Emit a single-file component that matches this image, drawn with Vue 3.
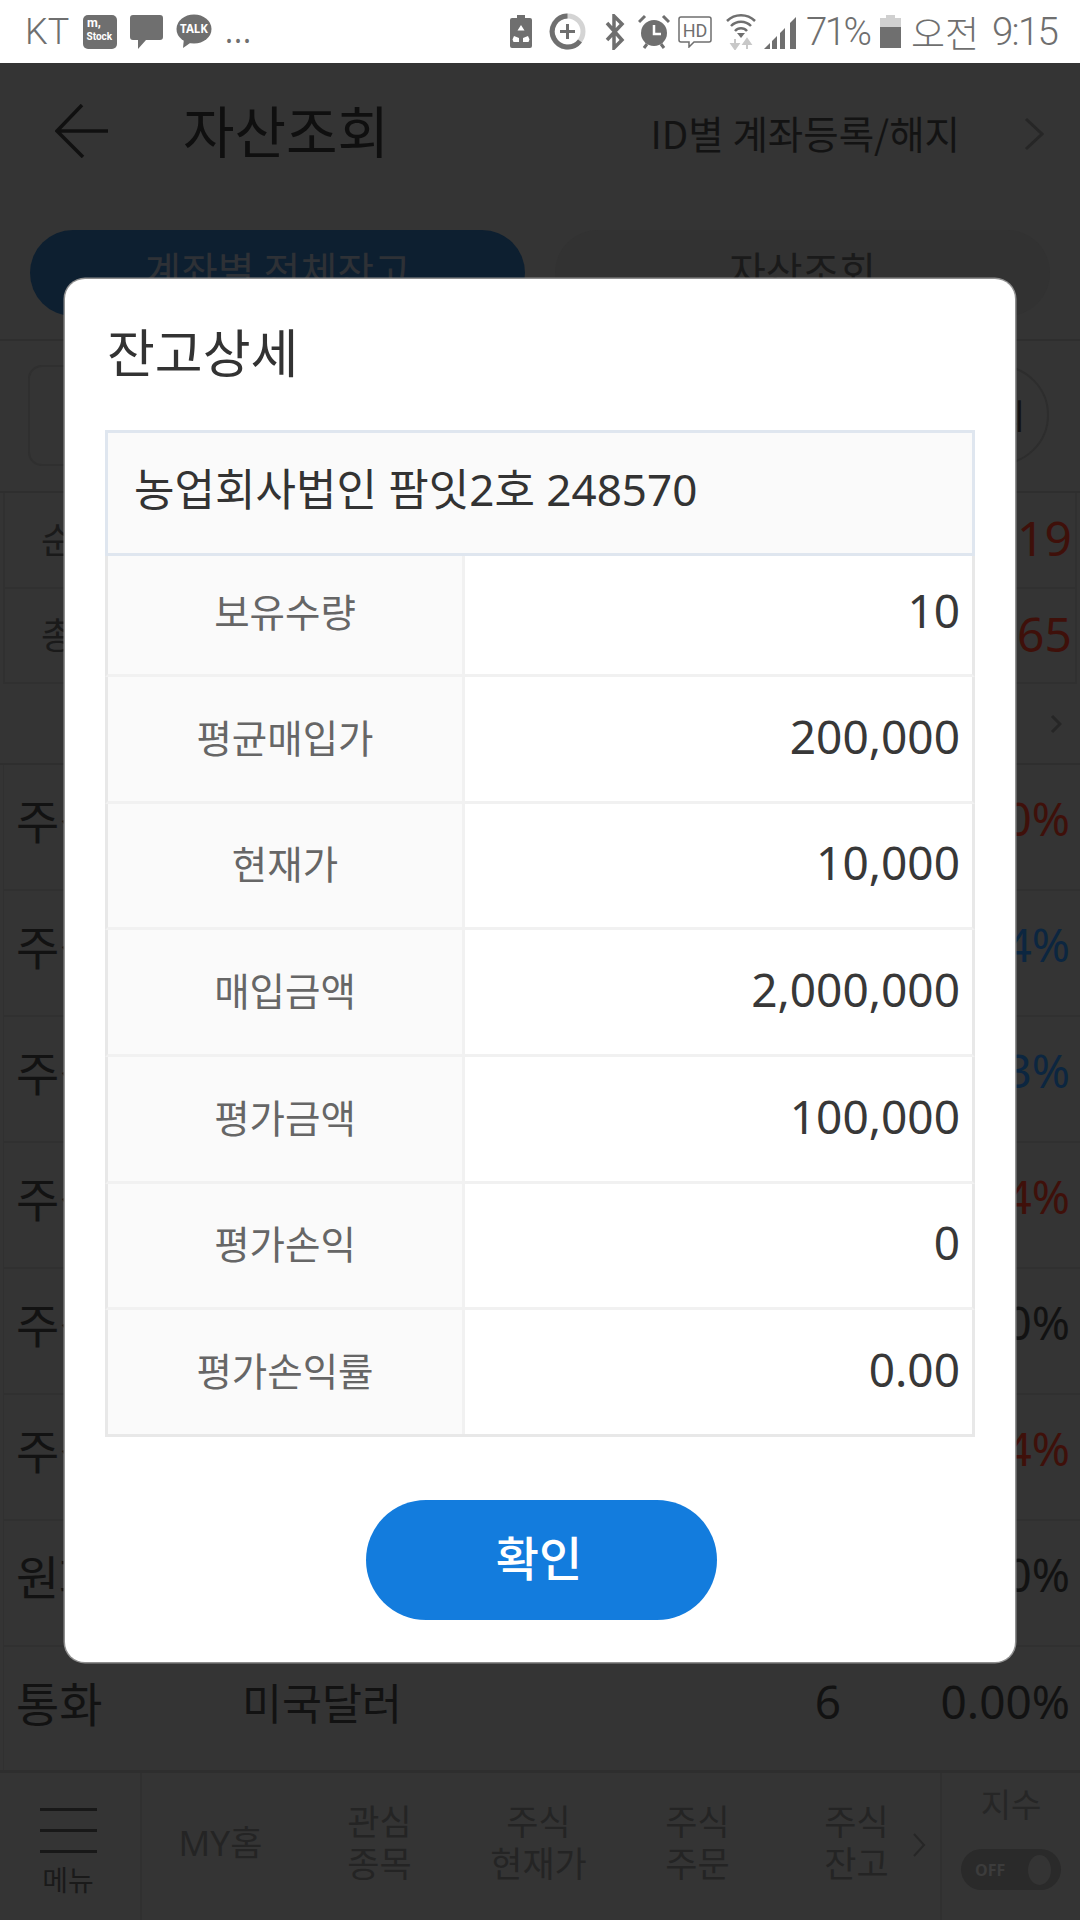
<script setup>
const tabs = [
  { label: '계좌별 전체잔고', active: true },
  { label: '자산조회', active: false }
]
const summary = [
  { label: '순자산', value: '019' },
  { label: '총자산', value: '65' }
]
const rows = [
  { type: '주식', pct: '0%', tone: 'red' },
  { type: '주식', pct: '4%', tone: 'blue' },
  { type: '주식', pct: '3%', tone: 'blue' },
  { type: '주식', pct: '4%', tone: 'red' },
  { type: '주식', pct: '0%', tone: '' },
  { type: '주식', pct: '4%', tone: 'red' },
  { type: '원화', pct: '0%', tone: '' },
  { type: '통화', name: '미국달러', qty: '6', pct: '0.00%', tone: '' }
]
const nav = [
  ['MY홈'],
  ['관심', '종목'],
  ['주식', '현재가'],
  ['주식', '주문'],
  ['주식', '잔고']
]
const details = [
  ['보유수량', '10'],
  ['평균매입가', '200,000'],
  ['현재가', '10,000'],
  ['매입금액', '2,000,000'],
  ['평가금액', '100,000'],
  ['평가손익', '0'],
  ['평가손익률', '0.00']
]
</script>

<template>
  <div class="page">
    <header class="status">
      <span class="carrier">KT</span>
      <svg class="ic mstock" width="34" height="34" viewBox="0 0 34 34">
        <rect width="34" height="34" rx="5" fill="#6f6f6f" />
        <text x="4" y="11.500" class="ms1">m,</text>
        <text x="3.500" y="24.500" class="ms2">Stock</text>
      </svg>
      <svg class="ic chat" width="33" height="35" viewBox="0 0 33 35">
        <path d="M3 1h27a3 3 0 0 1 3 3v19a3 3 0 0 1-3 3H16l-8 9v-9H3a3 3 0 0 1-3-3V4a3 3 0 0 1 3-3z" fill="#6f6f6f" />
      </svg>
      <svg class="ic talk" width="36" height="35" viewBox="0 0 36 35">
        <ellipse cx="18" cy="15" rx="17.500" ry="14.500" fill="#6f6f6f" />
        <path d="M8 24l-1 10 10-7z" fill="#6f6f6f" />
        <text x="18" y="19" text-anchor="middle" class="tk">TALK</text>
      </svg>
      <span class="more">...</span>
      <span class="spacer"></span>
      <svg class="ic" width="22" height="33" viewBox="0 0 22 33">
        <path d="M7 0h8v3h5a2 2 0 0 1 2 2v26a2 2 0 0 1-2 2H2a2 2 0 0 1-2-2V5a2 2 0 0 1 2-2h5z" fill="#6f6f6f" />
        <path d="M11 10l-3.500 5.500h7zM4 21l-1.500 3.500 1 2.500H9v-4zM18 21l1.500 3.500-1 2.500H13v-4z" fill="#fff" />
      </svg>
      <svg class="ic donut" width="37" height="37" viewBox="0 0 37 37">
        <circle cx="18.500" cy="18.500" r="15.500" fill="none" stroke="#d4d4d4" stroke-width="5" />
        <path d="M18.500 3A15.500 15.500 0 1 0 31 28" fill="none" stroke="#6f6f6f" stroke-width="5" />
        <path d="M18.500 11v15M11 18.500h15" stroke="#6f6f6f" stroke-width="3" />
      </svg>
      <svg class="ic bt" width="22" height="36" viewBox="0 0 22 36">
        <path d="M3 9l15 17-8 8V2l8 8L3 26" fill="none" stroke="#6f6f6f" stroke-width="3.500" />
      </svg>
      <svg class="ic alarm" width="32" height="36" viewBox="0 0 32 36">
        <circle cx="16" cy="19" r="13" fill="#6f6f6f" />
        <path d="M16 11v9h7" fill="none" stroke="#fff" stroke-width="2.500" />
        <path d="M1 8l6-6M31 8l-6-6M6 34l3-4M26 34l-3-4" stroke="#6f6f6f" stroke-width="3" />
      </svg>
      <svg class="ic hd" width="34" height="32" viewBox="0 0 34 32">
        <path d="M3 1h28a2 2 0 0 1 2 2v21a2 2 0 0 1-2 2H16l-5 5v-5H3a2 2 0 0 1-2-2V3a2 2 0 0 1 2-2z" fill="none" stroke="#6f6f6f" stroke-width="1.500" />
        <text x="17" y="21" text-anchor="middle" class="hdt">HD</text>
      </svg>
      <svg class="ic wifi" width="30" height="36" viewBox="0 0 30 36">
        <path d="M1 7a20 20 0 0 1 28 0M5 12a14 14 0 0 1 20 0M9 17a8 8 0 0 1 12 0" fill="none" stroke="#6f6f6f" stroke-width="2.500" />
        <path d="M11 19h8l-4 5z" fill="#6f6f6f" />
        <path d="M9 25v7M5.500 30h7l-3.500 5zM21 35v-7M17.500 30h7L21 25z" stroke="#c8c8c8" fill="#c8c8c8" stroke-width="2" />
      </svg>
      <svg class="ic signal" width="32" height="34" viewBox="0 0 32 34">
        <path d="M0 34l6-6v6z" fill="#6f6f6f" />
        <path d="M8 26l5-5v13H8zM16 18l5-5v21h-5z" fill="#6f6f6f" />
        <path d="M26 8l6-6v32h-6z" fill="#6f6f6f" />
      </svg>
      <span class="stat pct">71%</span>
      <svg class="ic batt" width="21" height="33" viewBox="0 0 21 33">
        <path d="M6 0h9v3h6v9H0V3h6z" fill="#d0d0d0" />
        <rect y="12" width="21" height="21" fill="#6f6f6f" />
      </svg>
      <span class="stat ampm">오전</span>
      <span class="stat clock">9:15</span>
    </header>

    <div class="appbar">
      <svg class="back" width="54" height="54" viewBox="0 0 54 54">
        <path d="M53 27H2M27 1L2 27l26 26" fill="none" stroke="#101010" stroke-width="3.500" />
      </svg>
      <h1 class="screen-title">자산조회</h1>
      <span class="id-link">ID별 계좌등록/해지</span>
      <svg class="id-chev" width="20" height="34" viewBox="0 0 20 34">
        <path d="M2 2l16 15L2 32" fill="none" stroke="#262626" stroke-width="3" />
      </svg>
    </div>

    <div class="tabs">
      <div v-for="t in tabs" :key="t.label" class="tab" :class="{ active: t.active }">{{ t.label }}</div>
    </div>

    <div class="search">
      <div class="search-box"></div>
      <div class="search-btn"><span class="search-text">조회</span></div>
    </div>

    <div class="summary">
      <div v-for="s in summary" :key="s.label" class="sum-row">
        <span>{{ s.label }}</span>
        <span class="red">{{ s.value }}</span>
      </div>
    </div>

    <div class="pager">
      <svg width="12" height="20" viewBox="0 0 12 20">
        <path d="M2 2l8 8-8 8" fill="none" stroke="#262626" stroke-width="3" />
      </svg>
    </div>

    <div class="list">
      <div v-for="(r, i) in rows" :key="i" class="item">
        <span class="type">{{ r.type }}</span>
        <span class="name">{{ r.name }}</span>
        <span class="qty">{{ r.qty }}</span>
        <span class="pctv" :class="r.tone">{{ r.pct }}</span>
      </div>
    </div>

    <nav class="bottom">
      <div class="menu">
        <span class="bars"><i></i><i></i><i></i></span>
        <span class="menu-label">메뉴</span>
      </div>
      <div class="nav-items">
        <div v-for="n in nav" :key="n.join()" class="nav-item">
          <span v-for="l in n" :key="l">{{ l }}</span>
        </div>
        <svg class="nav-chev" width="13" height="24" viewBox="0 0 13 24">
          <path d="M1 1l10 11L1 23" fill="none" stroke="#262626" stroke-width="2" />
        </svg>
      </div>
      <div class="index">
        <span class="index-label">지수</span>
        <div class="toggle"><span class="off">OFF</span><span class="knob"></span></div>
      </div>
    </nav>

    <section class="modal">
      <h2 class="modal-title">잔고상세</h2>
      <div class="table">
        <div class="thead">농업회사법인 팜잇2호 248570</div>
        <div v-for="d in details" :key="d[0]" class="tr">
          <div class="th">{{ d[0] }}</div>
          <div class="td">{{ d[1] }}</div>
        </div>
      </div>
      <button class="ok" type="button">확인</button>
    </section>
  </div>
</template>

<style>
html, body { margin: 0; padding: 0; }
</style>

<style scoped>
.page {
  position: relative;
  width: 1080px;
  height: 1920px;
  overflow: hidden;
  display: flex;
  flex-direction: column;
  background: #343434;
  color: #111;
  font-family: "Noto Sans", "Noto Sans CJK KR", sans-serif;
}

/* status bar */
.status {
  flex: none;
  height: 63px;
  background: #fff;
  display: flex;
  align-items: center;
  padding: 0 24px 0 25px;
  box-sizing: border-box;
  color: #6f6f6f;
}
.ic { flex: none; display: block; }
.carrier { font: 300 36px Roboto, sans-serif; width: 58px; }
.chat { margin-left: 13px; }
.talk { margin-left: 13px; }
.ms1 { font: 700 12.500px Roboto, sans-serif; fill: #fff; }
.ms2 { font: 700 10px Roboto, sans-serif; fill: #fff; }
.tk { font: 700 11.500px "Noto Sans", sans-serif; fill: #fff; }
.hdt { font: 400 18px Roboto, sans-serif; fill: #6f6f6f; }
.more { font: 400 30px "Noto Sans", sans-serif; margin-left: 13px; letter-spacing: 1px; }
.spacer { flex: 1; }
.donut { margin-left: 17px; }
.bt { margin-left: 18px; }
.alarm { margin-left: 12px; }
.hd { margin-left: 8px; }
.wifi { margin-left: 14px; }
.signal { margin-left: 8px; }
.stat { font: 300 38.500px Roboto, "Noto Sans CJK KR", sans-serif; line-height: 40px; }
.pct { margin-left: 10px; width: 66px; letter-spacing: -2.500px; }
.batt { margin-left: 8px; }
.ampm { margin-left: 10px; font-size: 37px; font-family: "Noto Sans CJK KR", sans-serif; }
.clock { margin-left: 13px; width: 64px; letter-spacing: -1.750px; }

/* app bar */
.appbar {
  flex: none;
  height: 136px;
  display: flex;
  align-items: center;
  padding-left: 55px;
}
.back { flex: none; }
.screen-title {
  margin: -6px 0 0 74px;
  font: 400 56px "Noto Sans CJK KR", sans-serif;
  color: #0f0f0f;
}
.id-link {
  margin-left: auto;
  font: 400 38.500px "Noto Sans CJK KR", sans-serif;
  color: #131313;
  margin-top: 2px;
}
.id-chev { margin: 6px 36px 0 64px; flex: none; }

/* tabs */
.tabs {
  flex: none;
  display: flex;
  gap: 30px;
  padding: 31px 30px 23px;
  border-bottom: 2px solid #2e2e2e;
}
.tab {
  flex: 1;
  height: 86px;
  border-radius: 43px;
  background: #323232;
  color: #1a1a1a;
  font: 400 40px/78px "Noto Sans CJK KR", sans-serif;
  text-align: center;
}
.tab.active { background: #0d1f30; color: #2e3136; }

/* search row */
.search {
  flex: none;
  height: 152px;
  box-sizing: border-box;
  padding: 24px 31px 26px 28px;
  display: flex;
  justify-content: space-between;
  border-bottom: 2px solid #2e2e2e;
}
.search-box {
  width: 60%;
  height: 101px;
  box-sizing: border-box;
  border: 2px solid #2f2f2f;
  border-radius: 14px;
}
.search-btn {
  width: 100px;
  height: 100px;
  box-sizing: border-box;
  border: 2px solid #2d2d2d;
  border-radius: 50%;
  font: 400 34px/96px "Noto Sans CJK KR", sans-serif;
  text-align: center;
  color: #111;
}
.search-text { position: relative; left: -5px; }

/* summary */
.summary { flex: none; margin: 0 3px; border-left: 2px solid #303030; border-right: 2px solid #303030; }
.sum-row {
  height: 95.500px;
  box-sizing: border-box;
  padding: 0 3px 4px 36px;
  display: flex;
  align-items: center;
  justify-content: space-between;
  border-bottom: 2px solid #303030;
  font: 400 36px "Noto Sans CJK KR", sans-serif;
  color: #1a1a1a;
}
.sum-row .red { font: 400 48px "Noto Sans", sans-serif; color: #3f100a; }

.pager {
  flex: none;
  height: 81px;
  box-sizing: border-box;
  padding: 0 18px 0 0;
  display: flex;
  align-items: center;
  justify-content: flex-end;
  border-bottom: 2px solid #2e2e2e;
}

/* list */
.list { flex: 1; min-height: 0; margin-left: 3px; border-left: 1px solid #303030; }
.item {
  height: 126px;
  box-sizing: border-box;
  padding: 0 10px 18px 12px;
  display: grid;
  grid-template-columns: 226px 1fr 116px 225px;
  align-items: center;
  border-bottom: 2px solid #303030;
  font: 400 43.500px "Noto Sans", "Noto Sans CJK KR", sans-serif;
  color: #121212;
}
.item:last-child { border-bottom: none; }
.type { font-size: 47px; }
.qty { text-align: right; padding-right: 4px; font-size: 46px; }
.pctv { text-align: right; font-size: 46px; }
.pctv.red { color: #3f100a; }
.pctv.blue { color: #0c2640; }

/* bottom nav */
.bottom {
  flex: none;
  height: 150px;
  display: flex;
  border-top: 3px solid #2e2e2e;
  box-sizing: border-box;
}
.menu {
  flex: none;
  width: 142px;
  border-right: 2px solid #303030;
  display: flex;
  flex-direction: column;
  align-items: center;
  padding: 35px 4px 0 0;
  box-sizing: border-box;
}
.bars { display: flex; flex-direction: column; gap: 18px; }
.bars i { display: block; width: 57px; height: 3px; background: #181818; }
.menu-label { font: 400 28px/32px "Noto Sans CJK KR", sans-serif; color: #1a1a1a; margin-top: 10px; }
.nav-items {
  flex: 1;
  position: relative;
  display: grid;
  grid-template-columns: 159px 159px 159px 159px 159px;
  justify-content: start;
  align-items: center;
  color: #242424;
  font: 400 35px/42px "Noto Sans", "Noto Sans CJK KR", sans-serif;
}
.nav-item {
  display: flex;
  flex-direction: column;
  align-items: center;
  position: relative;
  left: -1px;
  top: -4px;
}
.nav-chev { position: absolute; left: 771px; top: 60px; }
.index {
  flex: none;
  width: 140px;
  border-left: 2px solid #303030;
  display: flex;
  flex-direction: column;
  align-items: center;
  box-sizing: border-box;
  padding-top: 8px;
}
.index-label { font: 400 33px/44px "Noto Sans CJK KR", sans-serif; color: #262626; }
.toggle {
  margin-top: 24px;
  width: 100px;
  height: 41px;
  border-radius: 21px;
  background: #2a2a2a;
  display: flex;
  align-items: center;
  justify-content: space-between;
  padding: 0 10px 0 14px;
  box-sizing: border-box;
}
.off { font: 700 16px "Noto Sans", sans-serif; color: #3c3c3c; }
.knob { width: 23px; height: 30px; border-radius: 50%; background: #343434; }

/* modal */
.modal {
  position: absolute;
  left: 65px;
  top: 279px;
  width: 950px;
  height: 1383px;
  box-sizing: border-box;
  background: #fff;
  border-radius: 20px;
  box-shadow: 0 0 0 1.500px #8f8f8f;
  padding: 0 40px;
  display: flex;
  flex-direction: column;
  align-items: center;
}
.modal-title {
  align-self: flex-start;
  height: 151px;
  margin: 0 0 0 2px;
  font: 400 52px/143px "Noto Sans CJK KR", sans-serif;
  color: #333;
}
.table { width: 870px; flex: none; }
.thead {
  height: 126px;
  box-sizing: border-box;
  border: 3px solid #dfe6ef;
  background: #fafafa;
  padding-left: 26px;
  font: 400 44px/112px "Noto Sans", "Noto Sans CJK KR", sans-serif;
  color: #333;
}
.tr {
  height: 126.670px;
  box-sizing: border-box;
  display: flex;
  border: 3px solid #e8e8e8;
  border-width: 0 3px 3px;
  border-bottom-color: #f1f1f1;
}
.tr:nth-child(2) { height: 121px; }
.tr:nth-child(2) .th, .tr:nth-child(2) .td { padding-bottom: 11px; }
.tr:last-child { border-bottom-color: #e8e8e8; }
.th {
  width: 354px;
  flex: none;
  background: #fafafa;
  border-right: 3px solid #f1f1f1;
  display: flex;
  align-items: center;
  justify-content: center;
  font: 400 38.500px "Noto Sans CJK KR", sans-serif;
  color: #666;
  padding-bottom: 6px;
  box-sizing: content-box;
}
.td {
  flex: 1;
  display: flex;
  align-items: center;
  justify-content: flex-end;
  padding: 0 12px 6px 0;
  font: 400 46px "Noto Sans", sans-serif;
  color: #383838;
}
.ok {
  margin: 63px 0 0 2px;
  width: 351px;
  height: 120px;
  border: 0;
  border-radius: 60px;
  background: #137cdd;
  color: #fff;
  font: 500 47px "Noto Sans CJK KR", sans-serif;
  padding: 0 4px 8px 0;
}
</style>
